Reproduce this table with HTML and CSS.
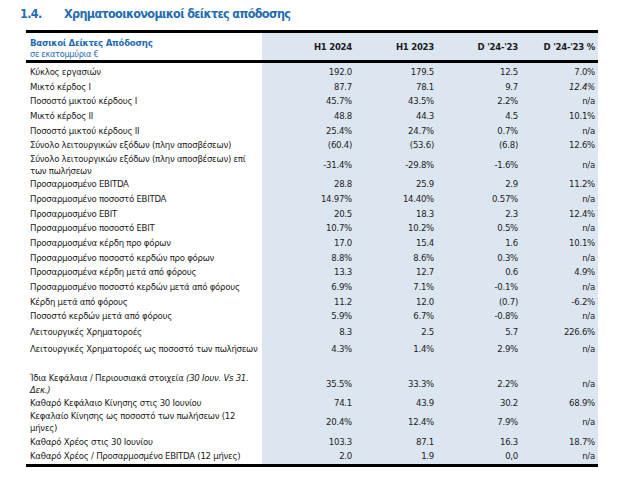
FILE: index.html
```html
<!DOCTYPE html>
<html lang="el">
<head>
<meta charset="utf-8">
<title>Χρηματοοικονομικοί δείκτες απόδοσης</title>
<link rel="stylesheet" href="styles.css">
</head>
<body>
<h2 class="title"><span class="num">1.4.</span><span class="ttl">Χρηματοοικονομικοί δείκτες απόδοσης</span></h2>
<table class="kpi">
  <colgroup>
    <col class="c-label"><col class="c1"><col class="c2"><col class="c3"><col class="c4">
  </colgroup>
  <thead>
    <tr>
      <th class="label"><span class="h-main">Βασικοί Δείκτες Απόδοσης</span><br><span class="h-sub">σε εκατομμύρια €</span></th>
      <th class="v">H1 2024</th>
      <th class="v">H1 2023</th>
      <th class="v">D '24-'23</th>
      <th class="v">D '24-'23 %</th>
    </tr>
  </thead>
  <tbody>
    <tr class="first"><td class="label">Κύκλος εργασιών</td><td class="v">192.0</td><td class="v">179.5</td><td class="v">12.5</td><td class="v">7.0%</td></tr>
    <tr><td class="label">Μικτό κέρδος Ι</td><td class="v">87.7</td><td class="v">78.1</td><td class="v">9.7</td><td class="v"><em>12.4%</em></td></tr>
    <tr><td class="label">Ποσοστό μικτού κέρδους Ι</td><td class="v">45.7%</td><td class="v">43.5%</td><td class="v">2.2%</td><td class="v">n/a</td></tr>
    <tr><td class="label">Μικτό κέρδος ΙΙ</td><td class="v">48.8</td><td class="v">44.3</td><td class="v">4.5</td><td class="v">10.1%</td></tr>
    <tr><td class="label">Ποσοστό μικτού κέρδους ΙΙ</td><td class="v">25.4%</td><td class="v">24.7%</td><td class="v">0.7%</td><td class="v">n/a</td></tr>
    <tr><td class="label">Σύνολο λειτουργικών εξόδων (πλην αποσβέσεων)</td><td class="v">(60.4)</td><td class="v">(53.6)</td><td class="v">(6.8)</td><td class="v">12.6%</td></tr>
    <tr class="two"><td class="label">Σύνολο λειτουργικών εξόδων (πλην αποσβέσεων) επί<br>των πωλήσεων</td><td class="v">-31.4%</td><td class="v">-29.8%</td><td class="v">-1.6%</td><td class="v">n/a</td></tr>
    <tr><td class="label">Προσαρμοσμένο EBITDA</td><td class="v">28.8</td><td class="v">25.9</td><td class="v">2.9</td><td class="v">11.2%</td></tr>
    <tr><td class="label">Προσαρμοσμένο ποσοστό EBITDA</td><td class="v">14.97%</td><td class="v">14.40%</td><td class="v">0.57%</td><td class="v">n/a</td></tr>
    <tr><td class="label">Προσαρμοσμένο EBIT</td><td class="v">20.5</td><td class="v">18.3</td><td class="v">2.3</td><td class="v">12.4%</td></tr>
    <tr><td class="label">Προσαρμοσμένο ποσοστό EBIT</td><td class="v">10.7%</td><td class="v">10.2%</td><td class="v">0.5%</td><td class="v">n/a</td></tr>
    <tr><td class="label">Προσαρμοσμένα κέρδη προ φόρων</td><td class="v">17.0</td><td class="v">15.4</td><td class="v">1.6</td><td class="v">10.1%</td></tr>
    <tr><td class="label">Προσαρμοσμένο ποσοστό κερδών προ φόρων</td><td class="v">8.8%</td><td class="v">8.6%</td><td class="v">0.3%</td><td class="v">n/a</td></tr>
    <tr><td class="label">Προσαρμοσμένα κέρδη μετά από φόρους</td><td class="v">13.3</td><td class="v">12.7</td><td class="v">0.6</td><td class="v">4.9%</td></tr>
    <tr><td class="label">Προσαρμοσμένο ποσοστό κερδών μετά από φόρους</td><td class="v">6.9%</td><td class="v">7.1%</td><td class="v">-0.1%</td><td class="v">n/a</td></tr>
    <tr><td class="label">Κέρδη μετά από φόρους</td><td class="v">11.2</td><td class="v">12.0</td><td class="v">(0.7)</td><td class="v">-6.2%</td></tr>
    <tr><td class="label">Ποσοστό κερδών μετά από φόρους</td><td class="v">5.9%</td><td class="v">6.7%</td><td class="v">-0.8%</td><td class="v">n/a</td></tr>
    <tr class="tall"><td class="label">Λειτουργικές Χρηματοροές</td><td class="v">8.3</td><td class="v">2.5</td><td class="v">5.7</td><td class="v">226.6%</td></tr>
    <tr class="tall"><td class="label">Λειτουργικές Χρηματοροές ως ποσοστό των πωλήσεων</td><td class="v">4.3%</td><td class="v">1.4%</td><td class="v">2.9%</td><td class="v">n/a</td></tr>
    <tr class="gap"><td class="label"></td><td class="v"></td><td class="v"></td><td class="v"></td><td class="v"></td></tr>
    <tr class="two"><td class="label">Ίδια Κεφάλαια / Περιουσιακά στοιχεία <em>(30 Ιουν. Vs 31.<br>Δεκ.)</em></td><td class="v">35.5%</td><td class="v">33.3%</td><td class="v">2.2%</td><td class="v">n/a</td></tr>
    <tr><td class="label">Καθαρό Κεφάλαιο Κίνησης στις 30 Ιουνίου</td><td class="v">74.1</td><td class="v">43.9</td><td class="v">30.2</td><td class="v">68.9%</td></tr>
    <tr class="two"><td class="label">Κεφαλαίο Κίνησης ως ποσοστό των πωλήσεων (12<br>μήνες)</td><td class="v">20.4%</td><td class="v">12.4%</td><td class="v">7.9%</td><td class="v">n/a</td></tr>
    <tr><td class="label">Καθαρό Χρέος στις 30 Ιουνίου</td><td class="v">103.3</td><td class="v">87.1</td><td class="v">16.3</td><td class="v">18.7%</td></tr>
    <tr><td class="label">Καθαρό Χρέος / Προσαρμοσμένο EBITDA (12 μήνες)</td><td class="v">2.0</td><td class="v">1.9</td><td class="v">0,0</td><td class="v">n/a</td></tr>
  </tbody>
</table>
</body>
</html>
```

FILE: styles.css
```css
html, body {
  margin: 0;
  padding: 0;
  background: #ffffff;
}

body {
  font-family: "DejaVu Sans Condensed", "DejaVu Sans", Verdana, sans-serif;
  color: #1c1c1c;
}

.title {
  margin: 0;
  padding: 6px 0 0 20px;
  height: 25px;
  box-sizing: border-box;
  font-size: 12.5px;
  line-height: 16px;
  letter-spacing: -0.65px;
  font-weight: bold;
  color: #1f6db3;
  display: flex;
}

.title .num {
  width: 44px;
}

.kpi {
  margin-left: 26px;
  margin-top: 5px;
  width: 572px;
  border-collapse: collapse;
  table-layout: fixed;
  font-size: 9.5px;
  letter-spacing: -0.25px;
  line-height: 12px;
  border-top: 3px solid #000;
  border-bottom: 3px solid #000;
}

.c-label { width: 236px; }
.c1 { width: 93px; }
.c2 { width: 82px; }
.c3 { width: 84px; }
.c4 { width: 77px; }

.kpi thead tr {
  height: 30px;
  border-bottom: 3px solid #000;
}

.kpi th {
  font-weight: bold;
  vertical-align: middle;
  padding-top: 2px;
}

.kpi th.label {
  text-align: left;
  padding: 3px 0 0 4px;
  line-height: 11px;
}

.h-main {
  color: #1f6db3;
  font-size: 9.5px;
}

.h-sub {
  color: #1f6db3;
  font-weight: normal;
  font-size: 9px;
}

.kpi td {
  padding: 1.35px 0;
  vertical-align: middle;
  white-space: nowrap;
}

.kpi td.label {
  padding-left: 4px;
}

.kpi .v {
  text-align: right;
  padding-right: 3px;
  background: #dce6f1;
}

.kpi tr.first td {
  padding-top: 3px;
}

.kpi tr.tall td {
  padding-top: 2.3px;
  padding-bottom: 2.3px;
}

.kpi tr.gap td {
  height: 12px;
}

.kpi tr.two td {
  padding-top: 0;
  padding-bottom: 0;
}

em {
  font-style: italic;
}
```
